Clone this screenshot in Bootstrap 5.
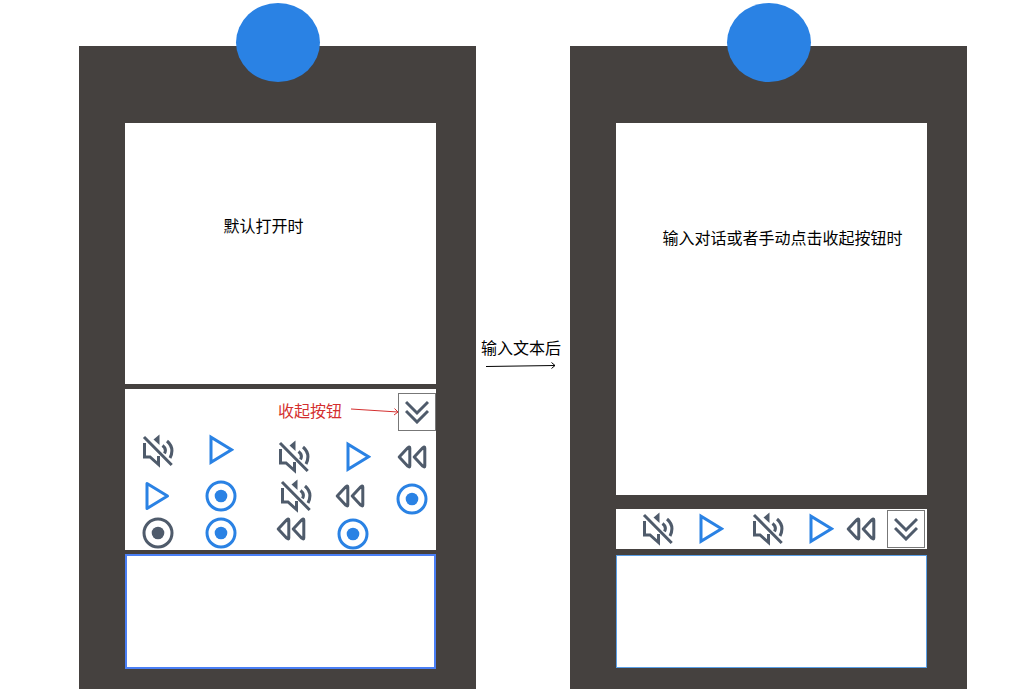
<!DOCTYPE html>
<html lang="zh-CN">
<head>
<meta charset="utf-8">
<meta name="viewport" content="width=device-width, initial-scale=1">
<title>收起按钮</title>
<link href="https://cdn.jsdelivr.net/npm/bootstrap@5.3.0/dist/css/bootstrap.min.css" rel="stylesheet">
<style>
  :root { --frame: #45413f; --accent: #2a82e4; --ink: #4f5b6b; --note: #d42f2f; }
  body { font: 16px/24px "Noto Sans CJK SC", sans-serif; color: #000; background: #fff; }
  svg { display: block; fill: none; stroke: currentColor; stroke-width: 3; }
  .flow-board { display: grid; grid-template-columns: 397fr 94fr 397fr; padding: 46px 49px 9px 79px; }
  .device { background: var(--frame); padding: 77px 40px 20px 46px; }
  .knob { width: 84px; height: 79px; top: -43px; background: var(--accent); }
  .screen { background: #fff; }
  .screen-open { min-height: 261px; padding: 90px 34px 0 0; }
  .screen-full { min-height: 372px; padding: 102px 0 0 22px; }
  .tools { background: #fff; }
  .tools-open { margin: 5px 0 4px; min-height: 161px; padding-top: 4px; }
  .tools-slim { margin: 14px 0 6px; min-height: 40px; padding: 0 2px 0 26px; }
  .field { height: 115px; border: 2px solid #4a7ff5; border-radius: 0; resize: none; background: #fff; }
  .field-slim { height: 113px; border: 1px solid #5a9fe6; }
  .tool { border: 0; padding: 0; background: none; color: var(--ink); line-height: 0; }
  .tool-blue { color: var(--accent); }
  .fold { width: 38px; height: 38px; border: 1px solid #777; display: grid; place-items: center; }
  .note { color: var(--note); }
  .thin-arrow { stroke-width: 1; }
  .pads { padding: 3px 0 0 17px; gap: 39px; }
  .pad-left, .pad-right { display: grid; justify-items: center; }
  .pad-left { grid-template: 46px 37px 32px / 32px 32px; gap: 0 31px; align-items: start; }
  .pad-right { grid-template: 38px 38px 34px / 36px 36px 36px; gap: 1px 23px; padding-top: 4px; align-items: center; }
  .to-start { justify-self: start; }
  .to-end { justify-self: end; }
  .pair { gap: 24px; }
  .pairs { gap: 28px; }
  .tail { gap: 11px; }
  .step { padding-top: 289px; }
</style>
</head>
<body>
<svg class="d-none" aria-hidden="true">
  <symbol id="mute" viewBox="0 0 32 34">
    <path d="M2 3 29.700 31M2.500 9v14H8l8.500 7.500V22M20.500 11.500Q25 15 22.500 19.500M25 7Q33 14 28 24"/>
    <path d="M17.500.500V11L11.500 5.500Z" fill="currentColor" stroke="none"/>
  </symbol>
  <symbol id="play" viewBox="0 0 26 32"><path d="M3 3.200V28.300L23.500 15.800Z"/></symbol>
  <symbol id="play-soft" viewBox="0 0 26 32"><path d="M2 3.500V28.500L22.500 16Z" stroke-linejoin="round"/></symbol>
  <symbol id="record" viewBox="0 0 32 32"><circle cx="16" cy="16" r="14"/><circle cx="16" cy="16" r="6.300" fill="currentColor" stroke="none"/></symbol>
  <symbol id="rewind" viewBox="0 0 30 26"><path d="M2.200 13 10.800 3.800Q12.800 2.200 12.800 4V22Q12.800 23.800 10.800 22.200ZM17.200 13 25.800 3.800Q27.800 2.200 27.800 4V22Q27.800 23.800 25.800 22.200Z" stroke-linejoin="round"/></symbol>
  <symbol id="fold" viewBox="0 0 24 24"><path d="M1 2 12 13 23 2M1 11 12 22 23 11"/></symbol>
</svg>

<main class="flow-board">
  <section class="device position-relative d-flex flex-column">
    <div class="knob rounded-circle position-absolute start-50 translate-middle-x"></div>
    <div class="screen screen-open text-center">默认打开时</div>
    <div class="tools tools-open">
      <div class="d-flex justify-content-end align-items-center">
        <span class="note pe-2 pb-1">收起按钮</span>
        <svg class="note thin-arrow" width="48" height="12" viewBox="0 0 48 12"><path d="M1 3 48 6M44.500 2.500 48 6 44 9"/></svg>
        <button class="tool fold" type="button" aria-label="收起"><svg width="24" height="24"><use href="#fold"/></svg></button>
      </div>
      <div class="pads d-flex">
        <div class="pad-left">
          <button class="tool" type="button" aria-label="静音"><svg width="32" height="34"><use href="#mute"/></svg></button>
          <button class="tool tool-blue" type="button" aria-label="播放"><svg width="26" height="32"><use href="#play"/></svg></button>
          <button class="tool tool-blue" type="button" aria-label="播放"><svg width="26" height="32"><use href="#play-soft"/></svg></button>
          <button class="tool tool-blue" type="button" aria-label="录制"><svg width="32" height="32"><use href="#record"/></svg></button>
          <button class="tool" type="button" aria-label="录制"><svg width="32" height="32"><use href="#record"/></svg></button>
          <button class="tool tool-blue" type="button" aria-label="录制"><svg width="32" height="32"><use href="#record"/></svg></button>
        </div>
        <div class="pad-right">
          <button class="tool" type="button" aria-label="静音"><svg width="32" height="34"><use href="#mute"/></svg></button>
          <button class="tool tool-blue to-end" type="button" aria-label="播放"><svg width="26" height="32"><use href="#play"/></svg></button>
          <button class="tool" type="button" aria-label="后退"><svg width="30" height="26"><use href="#rewind"/></svg></button>
          <button class="tool to-end" type="button" aria-label="静音"><svg width="32" height="34"><use href="#mute"/></svg></button>
          <button class="tool to-start" type="button" aria-label="后退"><svg width="30" height="26"><use href="#rewind"/></svg></button>
          <button class="tool tool-blue align-self-end" type="button" aria-label="录制"><svg width="32" height="32"><use href="#record"/></svg></button>
          <button class="tool to-start align-self-start" type="button" aria-label="后退"><svg width="30" height="26"><use href="#rewind"/></svg></button>
          <button class="tool tool-blue align-self-end" type="button" aria-label="录制"><svg width="32" height="32"><use href="#record"/></svg></button>
        </div>
      </div>
    </div>
    <textarea class="field w-100" aria-label="输入文本"></textarea>
  </section>

  <div class="step d-flex flex-column align-items-center text-nowrap pe-1">
    <span>输入文本后</span>
    <svg class="thin-arrow" width="70" height="12" viewBox="0 0 70 12"><path d="M0 7.500 69 6.500M65.500 3.500 69 6.500 65.500 9.500"/></svg>
  </div>

  <section class="device position-relative d-flex flex-column">
    <div class="knob rounded-circle position-absolute start-50 translate-middle-x"></div>
    <div class="screen screen-full text-center">输入对话或者手动点击收起按钮时</div>
    <div class="tools tools-slim d-flex align-items-center">
      <div class="pairs d-flex">
        <div class="pair d-flex align-items-center">
          <button class="tool" type="button" aria-label="静音"><svg width="32" height="34"><use href="#mute"/></svg></button>
          <button class="tool tool-blue" type="button" aria-label="播放"><svg width="26" height="32"><use href="#play"/></svg></button>
        </div>
        <div class="pair d-flex align-items-center">
          <button class="tool" type="button" aria-label="静音"><svg width="32" height="34"><use href="#mute"/></svg></button>
          <button class="tool tool-blue" type="button" aria-label="播放"><svg width="26" height="32"><use href="#play"/></svg></button>
        </div>
      </div>
      <div class="tail d-flex align-items-center ms-auto">
        <button class="tool" type="button" aria-label="后退"><svg width="30" height="26"><use href="#rewind"/></svg></button>
        <button class="tool fold" type="button" aria-label="收起"><svg width="24" height="24"><use href="#fold"/></svg></button>
      </div>
    </div>
    <textarea class="field field-slim w-100" aria-label="输入文本"></textarea>
  </section>
</main>
<script src="https://cdn.jsdelivr.net/npm/bootstrap@5.3.0/dist/js/bootstrap.bundle.min.js"></script>
</body>
</html>
